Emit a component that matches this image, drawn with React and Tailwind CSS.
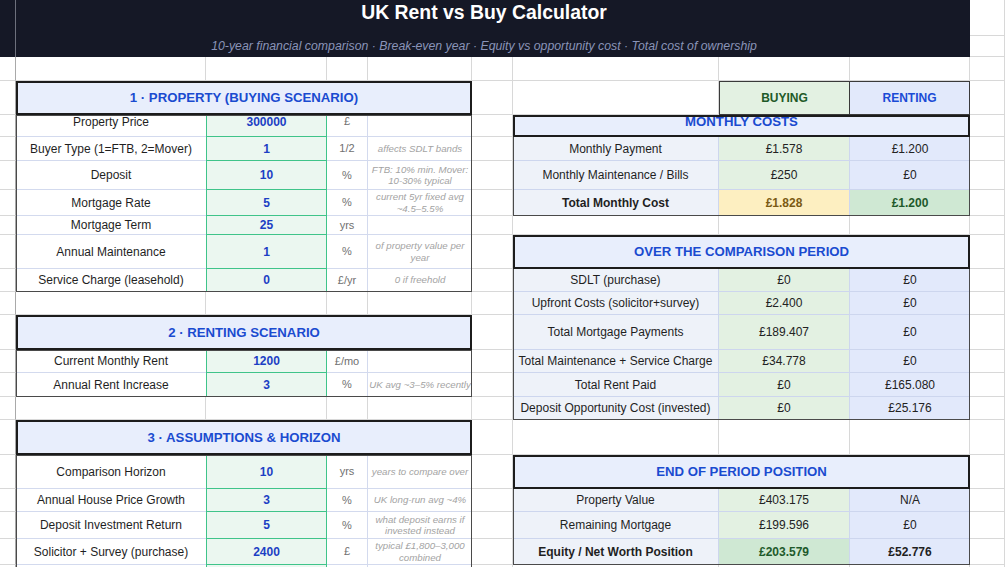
import React from "react";

const GRID =
  "grid grid-cols-[16px_190px_121px_41px_104px_41px_206px_131px_120px_35px] grid-rows-[36px_21px_24px_34px_22px_24px_29px_26px_19px_34px_23px_23px_35px_23px_24px_23px_35px_34px_23px_27px_26px_30px]";

const sec1 = [
  { row: "row-start-5", label: "Property Price", value: "300000", unit: "£", note: [], first: true },
  { row: "row-start-6", label: "Buyer Type (1=FTB, 2=Mover)", value: "1", unit: "1/2", note: ["affects SDLT bands"] },
  { row: "row-start-7", label: "Deposit", value: "10", unit: "%", note: ["FTB: 10% min. Mover:", "10-30% typical"] },
  { row: "row-start-8", label: "Mortgage Rate", value: "5", unit: "%", note: ["current 5yr fixed avg", "~4.5–5.5%"] },
  { row: "row-start-9", label: "Mortgage Term", value: "25", unit: "yrs", note: [] },
  { row: "row-start-10", label: "Annual Maintenance", value: "1", unit: "%", note: ["of property value per", "year"] },
  { row: "row-start-11", label: "Service Charge (leasehold)", value: "0", unit: "£/yr", note: ["0 if freehold"] },
];

const sec2 = [
  { row: "row-start-14", label: "Current Monthly Rent", value: "1200", unit: "£/mo", note: [] },
  { row: "row-start-15", label: "Annual Rent Increase", value: "3", unit: "%", note: ["UK avg ~3–5% recently"] },
];

const sec3 = [
  { row: "row-start-18", label: "Comparison Horizon", value: "10", unit: "yrs", note: ["years to compare over"] },
  { row: "row-start-19", label: "Annual House Price Growth", value: "3", unit: "%", note: ["UK long-run avg ~4%"] },
  { row: "row-start-20", label: "Deposit Investment Return", value: "5", unit: "%", note: ["what deposit earns if", "invested instead"] },
  { row: "row-start-21", label: "Solicitor + Survey (purchase)", value: "2400", unit: "£", note: ["typical £1,800–3,000", "combined"] },
  { row: "row-start-22", label: "", value: "", unit: "", note: [] },
];

const BUY = "bg-[#e3f1e2] text-[#222222]";
const RENT = "bg-[#e2e9fb] text-[#222222]";

const monthly = [
  { row: "row-start-6", label: "Monthly Payment", buy: "£1.578", rent: "£1.200", bc: BUY, rc: RENT },
  { row: "row-start-7", label: "Monthly Maintenance / Bills", buy: "£250", rent: "£0", bc: BUY, rc: RENT },
  {
    row: "row-start-8",
    label: "Total Monthly Cost",
    bold: true,
    buy: "£1.828",
    rent: "£1.200",
    bc: "bg-[#fdefc1] text-[#7b5b14] font-bold",
    rc: "bg-[#cfe8d3] text-[#1e5a2b] font-bold",
  },
];

const period = [
  { row: "row-start-11", label: "SDLT (purchase)", buy: "£0", rent: "£0", bc: BUY, rc: RENT },
  { row: "row-start-12", label: "Upfront Costs (solicitor+survey)", buy: "£2.400", rent: "£0", bc: BUY, rc: RENT },
  { row: "row-start-13", label: "Total Mortgage Payments", buy: "£189.407", rent: "£0", bc: BUY, rc: RENT },
  { row: "row-start-14", label: "Total Maintenance + Service Charge", buy: "£34.778", rent: "£0", bc: BUY, rc: RENT },
  { row: "row-start-15", label: "Total Rent Paid", buy: "£0", rent: "£165.080", bc: BUY, rc: RENT },
  { row: "row-start-16", label: "Deposit Opportunity Cost (invested)", buy: "£0", rent: "£25.176", bc: BUY, rc: RENT },
];

const endPos = [
  { row: "row-start-19", label: "Property Value", buy: "£403.175", rent: "N/A", bc: BUY, rc: RENT },
  { row: "row-start-20", label: "Remaining Mortgage", buy: "£199.596", rent: "£0", bc: BUY, rc: RENT },
  {
    row: "row-start-21",
    label: "Equity / Net Worth Position",
    bold: true,
    buy: "£203.579",
    rent: "£52.776",
    bc: "bg-[#cfe8d3] text-[#1e5a2b] font-bold",
    rc: "bg-[#e2e9fb] text-[#1f1f1f] font-bold",
  },
];

function Header({ pos, children, extra = "" }) {
  return (
    <div
      className={`${pos} flex items-center justify-center border-2 border-[#1c1c1c] bg-[#e8eefc] text-[13.2px] font-bold text-[#1a4bd0] ${extra}`}
    >
      {children}
    </div>
  );
}

function InputRows({ rows }) {
  return rows.map((r) => (
    <React.Fragment key={r.row}>
      <div
        className={`${r.row} col-start-2 flex items-center justify-center text-center text-[12px] text-[#1f1f1f] bg-white border-b border-[#d3daee] ${r.first ? "pb-2" : ""}`}
      >
        {r.label}
      </div>
      <div
        className={`${r.row} col-start-3 flex items-center justify-center text-[12px] font-bold text-[#1c3fc4] bg-[#ebf7f0] border-x border-b border-[#3fc48a] ${r.first ? "pb-2" : ""}`}
      >
        {r.value}
      </div>
      <div
        className={`${r.row} col-start-4 flex items-center justify-center text-[11px] text-[#707070] bg-white border-b border-r border-[#d3daee] ${r.first ? "pb-2" : ""}`}
      >
        {r.unit}
      </div>
      <div
        className={`${r.row} col-start-5 flex flex-col items-center justify-center text-center italic text-[9.7px] leading-[11.5px] text-[#a3a3a3] bg-white border-b border-[#d3daee]`}
      >
        {r.note.map((n) => (
          <span key={n} className="whitespace-nowrap">
            {n}
          </span>
        ))}
      </div>
    </React.Fragment>
  ));
}

function ResultRows({ rows }) {
  return rows.map((r) => (
    <React.Fragment key={r.row}>
      <div
        className={`${r.row} col-start-7 flex items-center justify-center text-center text-[12px] text-[#1f1f1f] bg-[#eef2f9] border-b border-r border-[#cdd6ee] ${r.bold ? "font-bold" : ""}`}
      >
        {r.label}
      </div>
      <div
        className={`${r.row} col-start-8 flex items-center justify-center text-[12px] border-b border-r border-[#cdd6ee] ${r.bc}`}
      >
        {r.buy}
      </div>
      <div
        className={`${r.row} col-start-9 flex items-center justify-center text-[12px] border-b border-[#cdd6ee] ${r.rc}`}
      >
        {r.rent}
      </div>
    </React.Fragment>
  ));
}

export default function App() {
  return (
    <div className="grid h-[567px] w-[1005px] overflow-hidden bg-white font-['Liberation_Sans',Arial,sans-serif]">
      {/* spreadsheet gridlines */}
      <div className={`col-start-1 row-start-1 ${GRID}`}>
        {Array.from({ length: 220 }).map((_, i) => (
          <div
            key={i}
            className={
              i % 10 === 0
                ? "border-b border-r border-b-[#d8d8d8] border-r-[#a9a9a9]"
                : "border-b border-r border-[#d8d8d8]"
            }
          />
        ))}
      </div>

      {/* content */}
      <div className={`col-start-1 row-start-1 ${GRID}`}>
        {/* title band */}
        <div className="col-start-1 col-span-9 row-start-1 row-span-2 flex bg-[#151826]">
          <div className="w-[16px] shrink-0 border-r border-[#6d707c]" />
          <div className="flex flex-1 flex-col items-center pr-[18px]">
            <div className="h-[36px] text-[19.4px] font-bold leading-[24px] text-white">
              UK Rent vs Buy Calculator
            </div>
            <div className="h-[21px] text-[12.3px] italic leading-[21px] text-[#8a94b8]">
              10-year financial comparison · Break-even year · Equity vs opportunity cost · Total cost of ownership
            </div>
          </div>
        </div>

        {/* Section 1 */}
        <Header pos="col-start-2 col-span-4 row-start-4">1 · PROPERTY (BUYING SCENARIO)</Header>
        <InputRows rows={sec1} />
        <div className="pointer-events-none col-start-2 col-span-4 row-start-5 row-span-7 border border-[#4a4a4a]" />

        {/* Section 2 */}
        <Header pos="col-start-2 col-span-4 row-start-13">2 · RENTING SCENARIO</Header>
        <InputRows rows={sec2} />
        <div className="pointer-events-none col-start-2 col-span-4 row-start-14 row-span-2 border border-[#4a4a4a]" />

        {/* Section 3 */}
        <Header pos="col-start-2 col-span-4 row-start-17">3 · ASSUMPTIONS &amp; HORIZON</Header>
        <InputRows rows={sec3} />
        <div className="pointer-events-none col-start-2 col-span-4 row-start-18 row-span-5 border-x border-t border-[#4a4a4a]" />

        {/* Buying / Renting column heads */}
        <div className="col-start-8 row-start-4 flex items-center justify-center border border-[#3a3a3a] bg-[#e3f1e2] text-[12px] font-bold text-[#1e5a28]">
          BUYING
        </div>
        <div className="col-start-9 row-start-4 flex items-center justify-center border-y border-r border-[#3a3a3a] bg-[#e2e9fb] text-[12px] font-bold text-[#1a4bd6]">
          RENTING
        </div>

        {/* Monthly costs */}
        <Header pos="col-start-7 col-span-3 row-start-5" extra="pb-2">
          MONTHLY COSTS
        </Header>
        <ResultRows rows={monthly} />
        <div className="pointer-events-none col-start-7 col-span-3 row-start-6 row-span-3 border-x border-b border-[#4a4a4a]" />

        {/* Over the comparison period */}
        <Header pos="col-start-7 col-span-3 row-start-10">OVER THE COMPARISON PERIOD</Header>
        <ResultRows rows={period} />
        <div className="pointer-events-none col-start-7 col-span-3 row-start-11 row-span-6 border-x border-b border-[#4a4a4a]" />

        {/* End of period */}
        <Header pos="col-start-7 col-span-3 row-start-18">END OF PERIOD POSITION</Header>
        <ResultRows rows={endPos} />
        <div className="pointer-events-none col-start-7 col-span-3 row-start-19 row-span-3 border-x border-b border-[#4a4a4a]" />
      </div>
    </div>
  );
}
